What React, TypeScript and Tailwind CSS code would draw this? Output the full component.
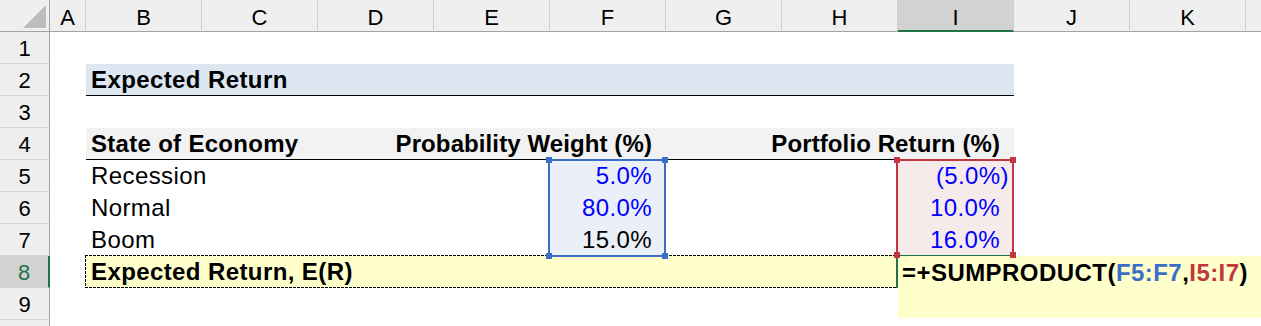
import React from 'react';

const FONT = "font-['Liberation_Sans',Arial,sans-serif]";

type Col = { id: string; width: string; label?: boolean };

const columns: Col[] = [
  { id: 'A', width: 'w-[36px]' },
  { id: 'B', width: 'w-[116px]' },
  { id: 'C', width: 'w-[116px]' },
  { id: 'D', width: 'w-[116px]' },
  { id: 'E', width: 'w-[116px]' },
  { id: 'F', width: 'w-[116px]' },
  { id: 'G', width: 'w-[116px]' },
  { id: 'H', width: 'w-[116px]' },
  { id: 'I', width: 'w-[116px]' },
  { id: 'J', width: 'w-[116px]' },
  { id: 'K', width: 'w-[116px]' },
  // only a sliver of L is on screen, its letter sits past the edge
  { id: 'L', width: 'w-[116px]', label: false },
];

const ACTIVE_COL = 'I';
const ACTIVE_ROW = 8;

const ColumnHeader = ({ col }: { col: Col }) => {
  const active = col.id === ACTIVE_COL;
  return (
    <div
      className={`${col.width} shrink-0 h-[32px] border-r border-r-[#cfcfcf] text-center text-[22px] leading-[25px] pt-[5px] ${
        active ? 'bg-[#d2d2d2] border-b-2 border-b-[#217346]' : 'bg-[#efefef] border-b border-b-[#a3a3a3]'
      }`}
    >
      {col.label === false ? null : col.id}
    </div>
  );
};

const RowHeader = ({ n, label = true }: { n: number; label?: boolean }) => {
  const active = n === ACTIVE_ROW;
  return (
    <div
      className={`w-[50px] shrink-0 h-[32px] border-b border-b-[#d5d5d5] text-center text-[22px] leading-[25px] pt-[4px] ${
        active
          ? 'bg-[#d2d2d2] border-r-2 border-r-[#217346] text-[#217346]'
          : 'bg-[#efefef] border-r border-r-[#a3a3a3] text-black'
      }`}
    >
      {label ? n : null}
    </div>
  );
};

const Row = ({ n, label, children }: { n: number; label?: boolean; children?: React.ReactNode }) => (
  <div className="flex h-[32px]">
    <RowHeader n={n} label={label} />
    <div className="w-[36px] shrink-0" />
    {children}
  </div>
);

const scenarios = [
  { state: 'Recession', weight: '5.0%', weightColor: 'text-[#0000ff]', ret: '(5.0%)', neg: true },
  { state: 'Normal', weight: '80.0%', weightColor: 'text-[#0000ff]', ret: '10.0%', neg: false },
  { state: 'Boom', weight: '15.0%', weightColor: 'text-black', ret: '16.0%', neg: false },
];

// little square grips on the corners of a highlighted range
const Grip = ({ className }: { className: string }) => (
  <div className={`absolute w-[6px] h-[6px] ${className}`} />
);

export default function App() {
  return (
    <div className={`relative w-[1261px] h-[326px] overflow-hidden bg-white text-black ${FONT}`}>
      {/* column letters */}
      <div className="flex h-[32px]">
        <div className="w-[50px] shrink-0 h-[32px] bg-[#efefef] border-r border-r-[#a3a3a3] border-b border-b-[#a3a3a3] relative">
          <svg className="absolute left-0 top-0" width="49" height="31" viewBox="0 0 49 31">
            <polygon points="46,5 46,28 23,28" fill="#bdbdbd" />
          </svg>
        </div>
        {columns.map((c) => (
          <ColumnHeader key={c.id} col={c} />
        ))}
      </div>

      <Row n={1} />

      <Row n={2}>
        <div className="w-[928px] shrink-0 h-[32px] bg-[#dde7f1] border-b border-b-black pl-[5px] text-[24px] leading-[31px] font-bold tracking-[0.4px]">
          Expected Return
        </div>
      </Row>

      <Row n={3} />

      <Row n={4}>
        <div className="flex w-[928px] shrink-0 h-[32px] bg-[#f2f2f2] border-b border-b-black text-[24px] leading-[31px] font-bold tracking-[0.1px] whitespace-nowrap">
          <div className="flex w-[580px] justify-between pl-[5px] pr-[14px]">
            <span className="tracking-[0.3px]">State of Economy</span>
            <span>Probability Weight (%)</span>
          </div>
          <div className="w-[348px] text-right pr-[14px]">Portfolio Return (%)</div>
        </div>
      </Row>

      {scenarios.map((s, i) => (
        <Row key={s.state} n={5 + i}>
          <div className="flex h-[32px] text-[24px] leading-[31px] tracking-[0.4px] whitespace-nowrap">
            <div className="w-[464px] pl-[5px]">{s.state}</div>
            <div className={`w-[116px] bg-[#eaeff8] text-right pr-[14px] ${s.weightColor}`}>{s.weight}</div>
            <div className="w-[232px]" />
            <div className={`w-[116px] bg-[#f7eaea] text-right text-[#0000ff] ${s.neg ? 'pr-[5px]' : 'pr-[14px]'}`}>
              {s.ret}
            </div>
          </div>
        </Row>
      ))}

      <Row n={8}>
        <div className="relative -ml-px -mt-px w-[812px] h-[33px] shrink-0 bg-[#ffffcc] pl-[6px] pt-px text-[24px] leading-[31px] font-bold tracking-[0.4px] whitespace-nowrap">
          {/* copy-range marching ants */}
          <div className="absolute left-0 top-0 w-full h-px bg-[repeating-linear-gradient(90deg,#000_0_3px,transparent_3px_4px)]" />
          <div className="absolute left-0 bottom-0 w-full h-px bg-[repeating-linear-gradient(90deg,#000_0_3px,transparent_3px_4px)]" />
          <div className="absolute left-0 top-0 w-px h-full bg-[repeating-linear-gradient(180deg,#000_0_3px,transparent_3px_4px)]" />
          Expected Return, E(R)
        </div>
      </Row>

      <Row n={9} />
      <Row n={10} label={false} />

      {/* F5:F7 reference range */}
      <div className="absolute left-[548px] top-[159px] w-[118px] h-[98px] border-2 border-[#3a6fc7]" />
      <Grip className="left-[546px] top-[157px] bg-[#3a6fc7]" />
      <Grip className="left-[662px] top-[157px] bg-[#3a6fc7]" />
      <Grip className="left-[546px] top-[253px] bg-[#3a6fc7]" />
      <Grip className="left-[662px] top-[253px] bg-[#3a6fc7]" />

      {/* I5:I7 reference range */}
      <div className="absolute left-[896px] top-[159px] w-[118px] h-[98px] border-2 border-[#c1373f]" />

      {/* active cell I8 */}
      <div className="absolute left-[896px] top-[255px] w-[118px] h-[2px] bg-[#217346]" />
      <div className="absolute left-[896px] top-[256px] w-[2px] h-[32px] bg-[#217346]" />

      {/* in-cell formula editor */}
      <div className="absolute left-[898px] top-[256px] w-[363px] h-[62px] bg-[#ffffcc] pl-[4px] text-[24px] leading-[34px] font-bold tracking-[0.45px] whitespace-nowrap">
        =+SUMPRODUCT(<span className="text-[#3a6fc7]">F5:F7</span>,<span className="text-[#c1373f]">I5:I7</span>)
      </div>

      <Grip className="left-[894px] top-[157px] bg-[#c1373f]" />
      <Grip className="left-[1010px] top-[157px] bg-[#c1373f]" />
      <Grip className="left-[894px] top-[252px] bg-[#c1373f]" />
      <Grip className="left-[1010px] top-[252px] bg-[#c1373f]" />
    </div>
  );
}
